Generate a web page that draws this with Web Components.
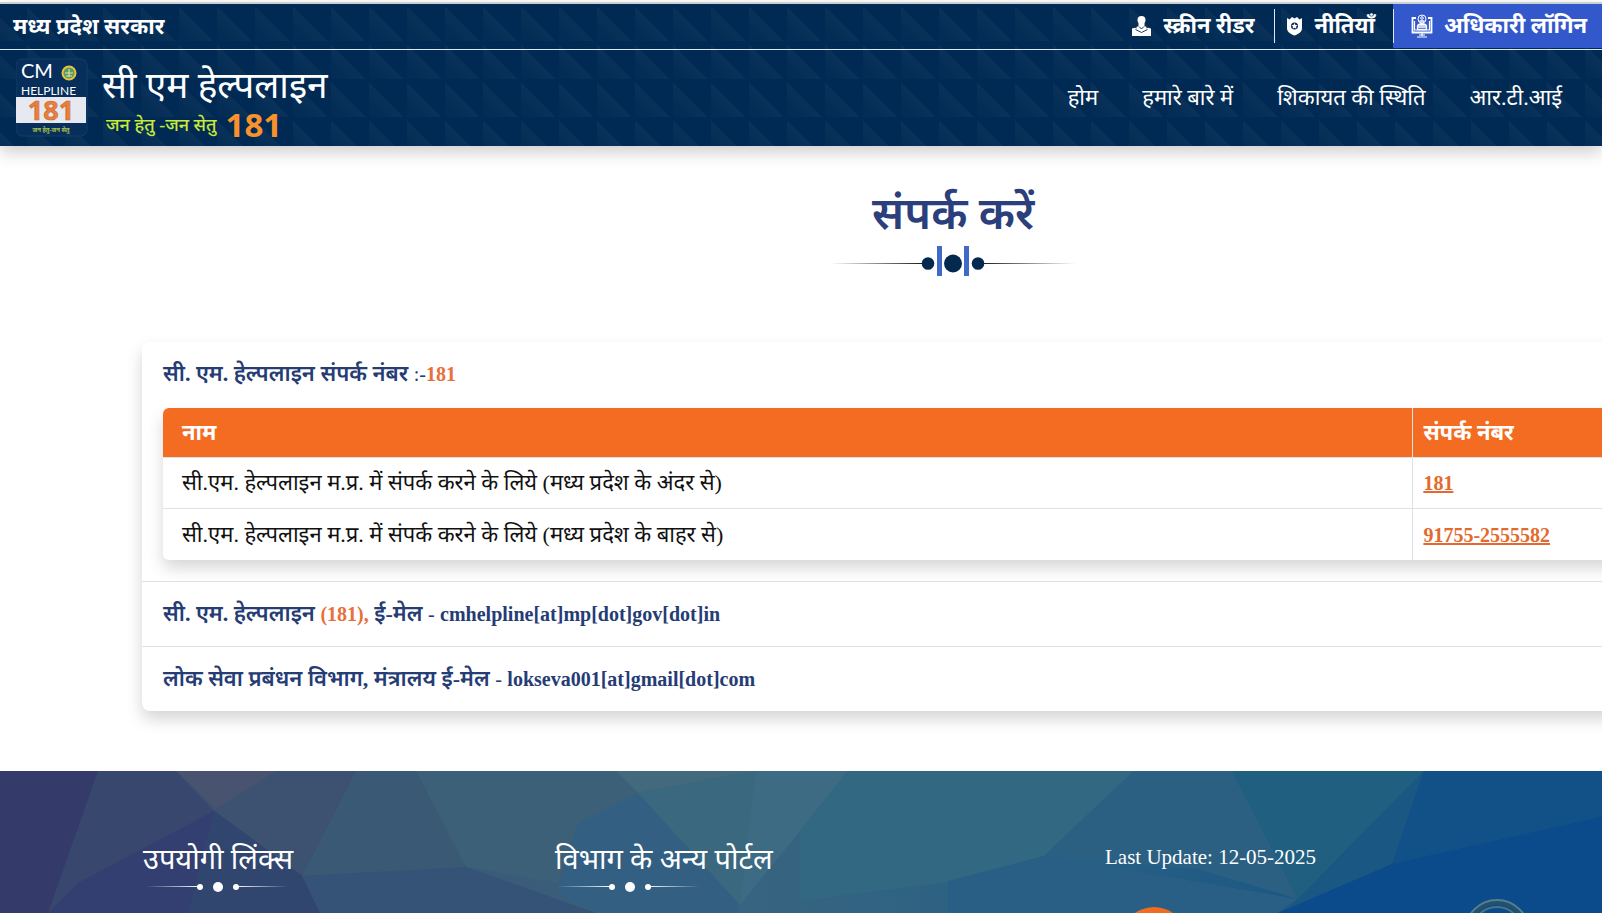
<!DOCTYPE html>
<html lang="hi">
<head>
<meta charset="utf-8">
<meta name="viewport" content="width=device-width, initial-scale=1">
<title>संपर्क करें - सी एम हेल्पलाइन 181</title>
<style>
  html { overflow-x: hidden; }
  body { margin: 0; background: #fff; color: #111; font: 20px/30px "Liberation Serif", "Noto Sans Devanagari", "Noto Sans", serif; overflow-x: hidden; }
</style>
</head>
<body>
<contact-page></contact-page>
<script>
const define = (name, html) => {
  const template = document.createElement('template');
  template.innerHTML = html;
  customElements.define(name, class extends HTMLElement {
    constructor() {
      super();
      this.attachShadow({ mode: 'open' }).append(template.content.cloneNode(true));
    }
  });
};

define('top-link', `
<style>
  :host { display: flex; }
  a { display: flex; align-items: center; gap: 11px; color: #fff; text-decoration: none; font-weight: 700; font-size: 22px; line-height: 46px; white-space: nowrap; }
  ::slotted(svg) { display: block; flex: none; }
</style>
<a href="#"><slot name="icon"></slot><slot></slot></a>`);

define('top-bar', `
<style>
  :host { display: flex; justify-content: space-between; align-items: center; height: 45px; border-bottom: 1px solid #dbe7f3; color: #fff; }
  .gov { padding-left: 13px; font-weight: 700; font-size: 22px; line-height: 44px; white-space: nowrap; }
  nav { display: flex; align-items: flex-start; height: 45px; }
  top-link { height: 44px; }
  .reader { padding-right: 20px; }
  .policy { padding: 0 18px 0 12px; position: relative; }
  .policy::before, .login::before { content: ""; position: absolute; left: 0; top: 5px; bottom: 5px; width: 1px; background: #dbe7f3; }
  .login { padding: 0 15px 0 18px; background: #3358cb; position: relative; }
</style>
<span class="gov">मध्य प्रदेश सरकार</span>
<nav aria-label="उपयोगिता">
  <top-link class="reader"><svg slot="icon" width="21" height="20" viewBox="0 0 21 20" fill="#fff"><circle cx="10.500" cy="4" r="4"/><path d="M7.500 7h6v3l2 1v3l-5 2-5-2v-3l2-1z"/><path d="M1 12.500l3-.8 6.500 3.300 6.500-3.300 3 .8V20H1z"/><path d="M4.500 13.500l6 3 6-3M8 10.500l2.500 2.500 2.500-2.500" stroke="#062a55" fill="none" stroke-width=".9"/></svg>स्क्रीन रीडर</top-link>
  <top-link class="policy"><svg slot="icon" width="17" height="20" viewBox="0 0 17 20" fill="#fff"><path d="M1 2l2.500 1.500L6 1l2.500 1.500L11 1l2.500 2.500L16 2v10c0 4-3.500 6-7.500 7.500C4.500 18 1 16 1 12z"/><circle cx="8.500" cy="10" r="3.500" fill="#062a55"/><path d="M8.500 7l1 2 2 .2-1.500 1.500.5 2.100-2-1.100-2 1.100.5-2.100-1.500-1.500 2-.2z"/></svg>नीतियाँ</top-link>
  <top-link class="login"><svg slot="icon" width="22" height="24" viewBox="0 0 22 24" fill="none" stroke="#fff"><path d="M5 4H1.500v14.500h19V4H17" stroke-width="1.800"/><path d="M3.500 7v9h15V7M6 23h10M8 21h6M11 18.500V22" stroke-width="1.200"/><circle cx="11" cy="5" r="4"/><circle cx="11" cy="4" r="1.300"/><path d="M6.500 16v-4c1-3 8-3 9 0v4M6 13h10M6 15.500h10M8 11h6M8.500 7h5" stroke-width="1.300"/></svg>अधिकारी लॉगिन</top-link>
</nav>`);

define('site-brand', `
<style>
  :host { display: block; }
  a { display: flex; align-items: center; gap: 14px; color: #fff; text-decoration: none; }
  svg { display: block; flex: none; }
  .words { display: flex; flex-direction: column; white-space: nowrap; }
  .name { font-size: 37px; line-height: 50px; padding-top: 4px; }
  .tag { display: flex; align-items: center; gap: 9px; padding-left: 4px; color: #c8ea3a; font-weight: 500; font-size: 18px; line-height: 28px; }
  b { font: 700 33px/28px "Noto Sans", sans-serif; color: #f7922d; }
</style>
<a href="#" aria-label="सी एम हेल्पलाइन 181">
  <svg width="72" height="80" viewBox="0 0 72 80">
    <rect x="0" y="1" width="71" height="77" rx="6" fill="#082f5c" stroke="#133d69"/>
    <text x="5" y="20" font-family="Lato, sans-serif" font-size="20" fill="#fff">CM</text>
    <circle cx="53" cy="15" r="6.500" fill="#5c9a63" stroke="#e6c53d" stroke-width="2"/>
    <path d="M49 15h8M53 11v8M50 18h6" stroke="#e9e4a0"/>
    <text x="5" y="37" font-family="Lato, sans-serif" font-size="12" fill="#fff">HELPLINE</text>
    <rect x="0" y="39" width="70" height="26" fill="#e6e9f0"/>
    <text x="35" y="62" text-anchor="middle" font-family="Noto Sans, sans-serif" font-weight="700" font-size="27" fill="#ee7d35" stroke="#b86b45" stroke-width=".6">181</text>
    <text x="35" y="74" text-anchor="middle" font-family="Noto Sans, sans-serif" font-weight="700" font-size="6" fill="#a9c34b">जन हेतु-जन सेतु</text>
  </svg>
  <span class="words">
    <span class="name">सी एम हेल्पलाइन</span>
    <span class="tag">जन हेतु -जन सेतु <b>181</b></span>
  </span>
</a>`);

define('main-nav', `
<style>
  :host { display: block; }
  nav { display: flex; gap: 44px; padding-right: 40px; }
  a { color: #fff; text-decoration: none; font-size: 22px; line-height: 40px; white-space: nowrap; }
</style>
<nav aria-label="मुख्य">
  <a href="#">होम</a><a href="#">हमारे बारे में</a><a href="#">शिकायत की स्थिति</a><a href="#">आर.टी.आई</a>
</nav>`);

define('site-header', `
<style>
  :host { display: block; margin-top: 2px; border-top: 2px solid #c9d0d3; box-shadow: 0 6px 16px rgba(0,0,0,.2); position: relative;
    background: linear-gradient(45deg, rgba(50,80,110,.05) 10%, rgba(60,90,115,.16) 46%, transparent 46%) 27px -1px / 38px 38px, #002a54; }
  .row { display: flex; justify-content: space-between; align-items: center; height: 96px; padding-left: 16px; }
</style>
<top-bar></top-bar>
<div class="row"><site-brand></site-brand><main-nav></main-nav></div>`);

define('page-title', `
<style>
  :host { display: flex; flex-direction: column; align-items: center; }
  h1 { margin: 0; font-size: 45px; line-height: 64px; font-weight: 600; color: #2b3f7c; white-space: nowrap; }
  svg { display: block; }
</style>
<h1><slot></slot></h1>
<svg width="246" height="30" viewBox="0 0 246 30" aria-hidden="true">
  <defs>
    <linearGradient id="l"><stop stop-color="#111" stop-opacity="0"/><stop offset="1" stop-color="#111"/></linearGradient>
    <linearGradient id="r"><stop stop-color="#111"/><stop offset="1" stop-color="#111" stop-opacity="0"/></linearGradient>
  </defs>
  <rect x="0" y="17" width="98" height="1" fill="url(#l)"/><rect x="148" y="17" width="98" height="1" fill="url(#r)"/>
  <circle cx="98" cy="17.500" r="6.300" fill="#04294f"/><circle cx="123" cy="17.500" r="9" fill="#04294f"/><circle cx="148" cy="17.500" r="6.300" fill="#04294f"/>
  <rect x="107" y="0" width="5" height="30" fill="#4169c8"/><rect x="134" y="0" width="5" height="30" fill="#4169c8"/>
</svg>`);

define('contact-table', `
<style>
  :host { display: block; border-radius: 6px; box-shadow: 0 8px 16px rgba(0,0,0,.16); background: #fff; }
  table { width: 100%; border-collapse: separate; border-spacing: 0; table-layout: fixed; }
  col.num { width: 331px; }
  th, td { height: 50px; box-sizing: border-box; padding: 0 10px; text-align: left; border-bottom: 1px solid #dee2e6; font-size: 22px; line-height: 32px; font-weight: 400; white-space: nowrap; }
  th:first-child, td:first-child { padding-left: 19px; }
  th + th, td + td { border-left: 1px solid #dee2e6; }
  th { background: #f36c21; color: #fff; font-weight: 700; }
  th:first-child { border-top-left-radius: 6px; }
  th:last-child { border-top-right-radius: 6px; }
  td { height: 51px; }
  tr:last-child td { border-bottom: 0; }
  a { color: #e36a2e; font-weight: 700; font-size: 20px; }
</style>
<table>
  <colgroup><col><col class="num"></colgroup>
  <thead><tr><th scope="col">नाम</th><th scope="col">संपर्क नंबर</th></tr></thead>
  <tbody>
    <tr><td>सी.एम. हेल्पलाइन म.प्र. में संपर्क करने के लिये (मध्य प्रदेश के अंदर से)</td><td><a href="tel:181">181</a></td></tr>
    <tr><td>सी.एम. हेल्पलाइन म.प्र. में संपर्क करने के लिये (मध्य प्रदेश के बाहर से)</td><td><a href="tel:917552555582">91755-2555582</a></td></tr>
  </tbody>
</table>`);

define('contact-item', `
<style>
  :host { display: block; padding: 0 21px; border-bottom: 1px solid #dee2e6; }
  :host(:last-child) { border-bottom: 0; }
  h2 { margin: 0; font-size: 22px; line-height: 64px; font-weight: 600; color: #253c74; white-space: nowrap; }
  ::slotted(b) { color: #e8703a; font-size: 20px; }
  ::slotted(i) { font-style: normal; font-size: 20px; font-weight: 400; }
  ::slotted(span) { font-size: 20px; font-weight: 700; }
  ::slotted(contact-table) { margin: 2px 0 21px; }
</style>
<h2><slot></slot></h2><slot name="body"></slot>`);

define('contact-card', `
<style>
  :host { display: block; background: #fff; border-radius: 8px; box-shadow: 0 8px 16px rgba(0,0,0,.17); }
</style>
<slot></slot>`);

define('footer-heading', `
<style>
  :host { display: block; }
  h3 { margin: 0; font-size: 29px; line-height: 44px; font-weight: 400; color: #fff; white-space: nowrap; }
  svg { display: block; }
</style>
<h3><slot></slot></h3>
<svg width="150" height="12" viewBox="0 0 150 12" fill="#fff" aria-hidden="true">
  <defs>
    <linearGradient id="l"><stop stop-color="#fff" stop-opacity="0"/><stop offset="1" stop-color="#fff"/></linearGradient>
    <linearGradient id="r"><stop stop-color="#fff"/><stop offset="1" stop-color="#fff" stop-opacity="0"/></linearGradient>
  </defs>
  <rect x="2" y="5" width="55" height="1" fill="url(#l)"/><circle cx="57" cy="6" r="3"/><circle cx="75" cy="6" r="5"/><circle cx="93" cy="6" r="3"/><rect x="93" y="5" width="52" height="1" fill="url(#r)"/>
</svg>`);

define('site-footer', `
<style>
  :host { display: block; position: relative; overflow: hidden; background: #325e80; color: #fff; }
  .art { position: absolute; inset: 0; width: 100%; height: 100%; }
  .cols { position: relative; display: grid; grid-template-columns: 412fr 550fr 497fr; padding: 66px 0 0 143px; min-height: 142px; box-sizing: border-box; }
  .info { display: grid; grid-template-columns: 1fr 138px; align-content: start; row-gap: 22px; }
  p { grid-column: 1 / -1; margin: 0; font-size: 21px; line-height: 40px; }
  .info svg { display: block; }
</style>
<svg class="art" viewBox="0 0 1602 142" preserveAspectRatio="none" aria-hidden="true">
  <defs><linearGradient id="bg"><stop stop-color="#343c69"/><stop offset=".12" stop-color="#374a6e"/><stop offset=".28" stop-color="#3b5976"/><stop offset=".45" stop-color="#38647f"/><stop offset=".65" stop-color="#2a6184"/><stop offset=".8" stop-color="#1d5885"/><stop offset="1" stop-color="#0d4c8a"/></linearGradient></defs>
  <rect width="1602" height="142" fill="url(#bg)"/>
  <path d="M0 0h98L48 142H0z" fill="#343a69"/>
  <path d="M98 0h78l38 40-90 52-52 50H48z" fill="#38476d"/>
  <path d="M176 0h180L302 105 256 70 214 40z" fill="#3c5270"/>
  <path d="M176 0h100l-60 38z" fill="#48536f"/>
  <path d="M214 40l88 65 18 37H48l30-30z" fill="#323f70"/>
  <path d="M214 40l88 65 18 37H188z" fill="#31466f"/>
  <path d="M302 105L356 0h60l50 97z" fill="#3a5974"/>
  <path d="M302 105l164-9 130 46H320z" fill="#345377"/>
  <path d="M416 0h200l22 22-60 30-20 60-92-16z" fill="#3c6078"/>
  <path d="M616 0h140L638 22z" fill="#42697c"/>
  <path d="M638 22l102 112-3 8H596l-38-20 20-70z" fill="#335f83"/>
  <path d="M638 22L756 0h44l-15 60-45 74z" fill="#39687f"/>
  <path d="M756 0h92l-48 60-60 74z" fill="#3d6b84"/>
  <path d="M848 0h286l-90 85-90 25-154 20V60z" fill="#336883"/>
  <path d="M1134 0h98l66 128-100-30-154-13z" fill="#2b6083"/>
  <path d="M1044 85l254 43-20 14H948v-32z" fill="#295f84"/>
  <path d="M1232 0h192L1298 128z" fill="#205f80"/>
  <path d="M1424 0l-32 93-94 49h-20l20-14z" fill="#1b5783"/>
  <path d="M1424 0h178v46l-210 47z" fill="#125187"/>
  <path d="M1602 46v96h-324l114-49z" fill="#0b4a8b"/>
</svg>
<div class="cols">
  <footer-heading>उपयोगी लिंक्स</footer-heading>
  <footer-heading>विभाग के अन्य पोर्टल</footer-heading>
  <div class="info">
    <p>Last Update: 12-05-2025</p>
    <svg width="98" height="14" viewBox="0 0 98 14" aria-hidden="true"><circle cx="49" cy="41" r="33" fill="#f26b22"/></svg>
    <svg width="66" height="14" viewBox="0 0 66 14" fill="none" aria-hidden="true"><circle cx="33" cy="33" r="30" stroke="#24506f" stroke-width="6"/><circle cx="33" cy="33" r="32" stroke="#54808b" stroke-width="2"/><circle cx="33" cy="33" r="25" stroke="#4b7784" stroke-width="2"/></svg>
  </div>
</div>`);

define('contact-page', `
<style>
  :host { display: block; overflow: hidden; }
  main { width: 119%; box-sizing: border-box; padding: 36px 0 60px; }
  page-title { margin-bottom: 66px; }
  contact-card { margin: 0 142px; }
</style>
<site-header></site-header>
<main>
  <page-title>संपर्क करें</page-title>
  <contact-card>
    <contact-item>सी. एम. हेल्पलाइन संपर्क नंबर <i>:-</i><b>181</b><contact-table slot="body"></contact-table></contact-item>
    <contact-item>सी. एम. हेल्पलाइन <b>(181),</b> ई-मेल <i>-</i> <span>cmhelpline[at]mp[dot]gov[dot]in</span></contact-item>
    <contact-item>लोक सेवा प्रबंधन विभाग, मंत्रालय ई-मेल <i>-</i> <span>lokseva001[at]gmail[dot]com</span></contact-item>
  </contact-card>
</main>
<site-footer></site-footer>`);
</script>
</body>
</html>
